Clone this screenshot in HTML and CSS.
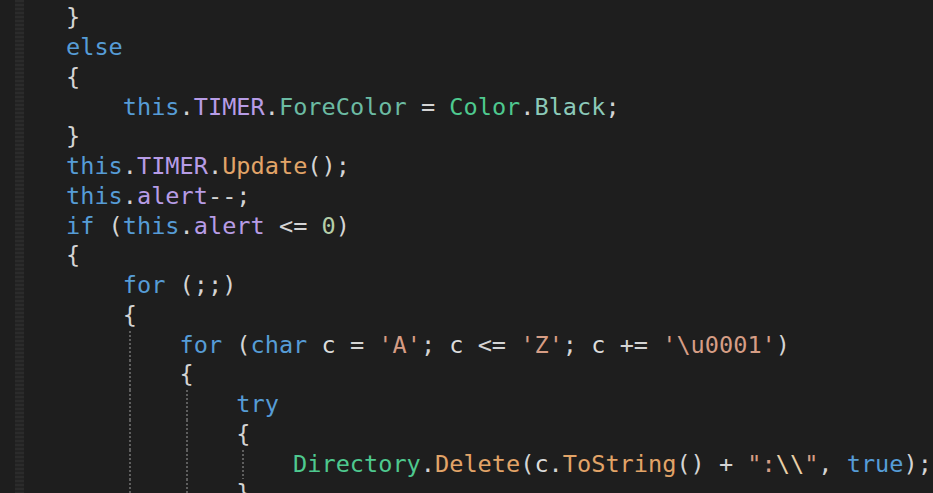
FILE: index.html
```html
<!DOCTYPE html>
<html lang="en">
<head>
<meta charset="utf-8">
<title>Code editor</title>
<link rel="stylesheet" href="styles.css">
</head>
<body>
<div class="editor">
  <div class="gutter"><div class="margin-dots"></div></div>
  <div class="code">
    <div class="ln"><span class="ind"></span><span class="kw">this</span>.<span class="fld">TIMER</span>.<span class="prop">ForeColor</span> = <span class="type">Color</span>.<span class="sprop">Red</span>;</div>
    <div class="ln">}</div>
    <div class="ln"><span class="kw">else</span></div>
    <div class="ln">{</div>
    <div class="ln"><span class="ind"></span><span class="kw">this</span>.<span class="fld">TIMER</span>.<span class="prop">ForeColor</span> = <span class="type">Color</span>.<span class="sprop">Black</span>;</div>
    <div class="ln">}</div>
    <div class="ln"><span class="kw">this</span>.<span class="fld">TIMER</span>.<span class="mth">Update</span>();</div>
    <div class="ln"><span class="kw">this</span>.<span class="fld">alert</span>--;</div>
    <div class="ln"><span class="kw">if</span> (<span class="kw">this</span>.<span class="fld">alert</span> &lt;= <span class="num">0</span>)</div>
    <div class="ln">{</div>
    <div class="ln"><span class="ind"></span><span class="kw">for</span> (;;)</div>
    <div class="ln"><span class="ind"></span>{</div>
    <div class="ln"><span class="ind"></span><span class="ind g"></span><span class="kw">for</span> (<span class="kw">char</span> <span class="var">c</span> = <span class="str">'A'</span>; <span class="var">c</span> &lt;= <span class="str">'Z'</span>; <span class="var">c</span> += <span class="str">'\u0001'</span>)</div>
    <div class="ln"><span class="ind"></span><span class="ind g"></span>{</div>
    <div class="ln"><span class="ind"></span><span class="ind g"></span><span class="ind g"></span><span class="kw">try</span></div>
    <div class="ln"><span class="ind"></span><span class="ind g"></span><span class="ind g"></span>{</div>
    <div class="ln"><span class="ind"></span><span class="ind g"></span><span class="ind g"></span><span class="ind g"></span><span class="type">Directory</span>.<span class="mth">Delete</span>(<span class="var">c</span>.<span class="mth">ToString</span>() + <span class="str">":<span class="esc">\\</span>"</span>, <span class="kw">true</span>);</div>
    <div class="ln"><span class="ind"></span><span class="ind g"></span><span class="ind g"></span>}</div>
  </div>
</div>
</body>
</html>
```
FILE: styles.css
```css
html, body {
  margin: 0;
  padding: 0;
  background: #1e1e1e;
  overflow: hidden;
}

.editor {
  display: flex;
  height: 493px;
  overflow: hidden;
}

.gutter {
  width: 66px;
  flex: none;
  display: flex;
}

.margin-dots {
  margin-left: 15px;
  width: 9px;
  background: repeating-linear-gradient(to bottom, #2b2b2b 0 2px, #232323 2px 4px);
}

.code {
  margin-top: -26.5px;
  font-family: "DejaVu Sans Mono", monospace;
  font-size: 23.58px;
  line-height: 29.75px;
  color: #d4d4d4;
  white-space: nowrap;
}

.ln {
  white-space: pre;
  height: 29.75px;
}

.ind {
  display: inline-block;
  width: 4ch;
  height: 29.75px;
  vertical-align: top;
}

.g {
  background-image: repeating-linear-gradient(to bottom, #5e5e5e 0 2px, transparent 2px 4px);
  background-repeat: no-repeat;
  background-size: 2px 100%;
  background-position: calc(0.5ch - 1px) 0;
}

.kw { color: #569cd6; }
.fld { color: #b79ce6; }
.prop { color: #6cbba3; }
.sprop { color: #8ccab9; }
.type { color: #4ec98f; }
.mth { color: #e2a468; }
.num { color: #b5cea8; }
.str { color: #d69d85; }
.esc { color: #e8cfa8; }
.var { color: #dcdcdc; }
```
